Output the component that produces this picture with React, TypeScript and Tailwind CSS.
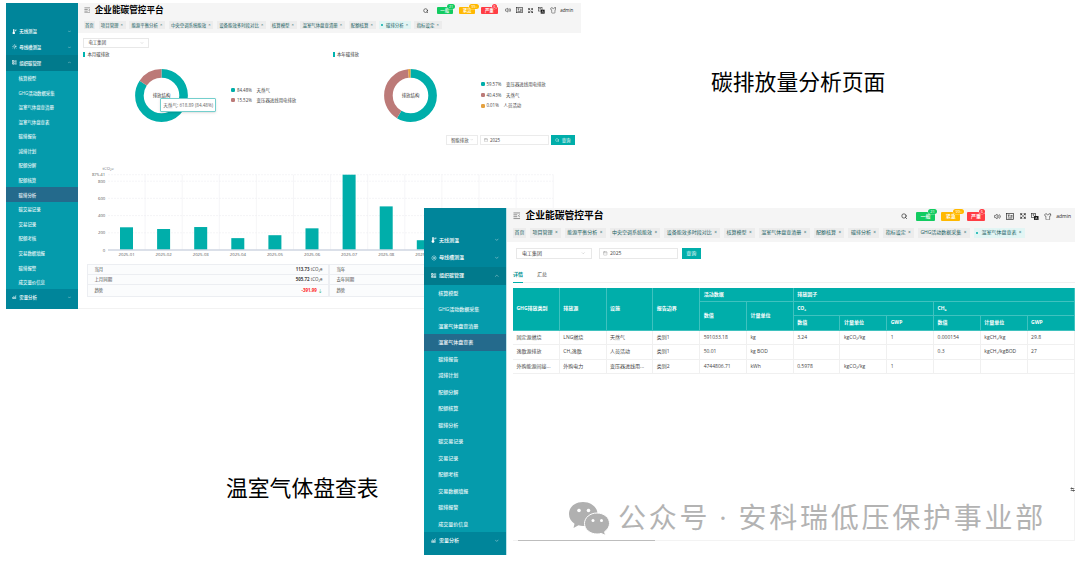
import type { ReactNode } from "react";
import {
  Calendar,
  ChartNoAxesCombined,
  ChevronDown,
  ChevronUp,
  Expand,
  LayoutList,
  Search,
  Settings2,
  Shirt,
  Sun,
  Volume2,
} from "lucide-react";

const SUB_MENU = [
  "核算模型",
  "GHG活动数据采集",
  "温室气体盘查清册",
  "温室气体盘查表",
  "碳排报告",
  "减排计划",
  "配额分解",
  "配额核算",
  "碳排分析",
  "碳交易记录",
  "交易记录",
  "配额考核",
  "交易数据填报",
  "碳排报警",
  "成交量价信息",
];

const TABS = [
  "项目管理",
  "能源平衡分析",
  "中央空调系统能效",
  "设备能效多时段对比",
  "核算模型",
  "温室气体盘查清册",
  "配额核算",
  "碳排分析",
  "指标设定",
];

const MONTHS = [
  { label: "2025-01", value: 264 },
  { label: "2025-02", value: 244 },
  { label: "2025-03", value: 267 },
  { label: "2025-04", value: 138 },
  { label: "2025-05", value: 172 },
  { label: "2025-06", value: 252 },
  { label: "2025-07", value: 875.41 },
  { label: "2025-08", value: 507 },
  { label: "2025-09", value: 113.73 },
];

type GroupProps = {
  icon: ReactNode;
  label: string;
  open?: boolean;
};

function MenuGroup({ icon, label, open = false }: GroupProps) {
  const Chevron = open ? ChevronUp : ChevronDown;

  return (
    <div
      className={`flex h-[3.55em] shrink-0 items-center pr-[1.3em] pl-[1.4em] font-medium text-white ${
        open ? "bg-[#017a8c]" : ""
      }`}
    >
      <span className="flex w-[1.6em]">{icon}</span>
      <span className="flex-1">{label}</span>
      <Chevron className="size-[1.1em] opacity-80" />
    </div>
  );
}

function ProbeIcon() {
  return (
    <svg className="size-[1.2em]" viewBox="0 0 12 12" fill="currentColor">
      <path d="M2.500 1.500a1.500 1.500 0 0 1 3 0v5.200a2.700 2.700 0 1 1-3 0Z" />
      <path d="M7 1.500h4V3H8.500v2H7Z" />
    </svg>
  );
}

// Sizes are in em so that both windows share the same markup at their own scale.
function Sidebar({ active }: { active: string }) {
  return (
    <aside className="flex w-[16.5em] shrink-0 flex-col border-r-[0.2em] border-[#bfe3e8] bg-[#00859a] pt-[4.65em]">
      <MenuGroup icon={<ProbeIcon />} label="无线测温" />
      <MenuGroup icon={<Sun className="size-[1.2em]" />} label="母线槽测温" />
      <MenuGroup icon={<LayoutList className="size-[1.1em]" strokeWidth={3} />} label="组织碳管理" open />
      <div className="bg-[#059bac]">
        {SUB_MENU.map((item) => (
          <div
            key={item}
            className={`flex h-[3.3em] items-center pt-[0.15em] pl-[2.85em] font-medium text-white/90 ${
              item === active ? "bg-[#246a8c]" : ""
            }`}
          >
            {item}
          </div>
        ))}
      </div>
      <MenuGroup icon={<ChartNoAxesCombined className="size-[1em]" strokeWidth={3} />} label="需量分析" />
    </aside>
  );
}

type AlarmProps = {
  label: string;
  count: string;
  className: string;
};

function Alarm({ label, count, className }: AlarmProps) {
  return (
    <span
      className={`relative flex h-[1.7em] w-[3.7em] items-center justify-center rounded-[0.2em] font-medium text-white ${className}`}
    >
      {label}
      <span
        className={`absolute top-[-0.75em] left-[3em] rounded-full px-[0.5em] py-[0.15em] text-[0.8em] leading-none ring-[0.3px] ring-white ${className}`}
      >
        {count}
      </span>
    </span>
  );
}

function FoldIcon() {
  return (
    <svg className="size-[1.5em] text-[#666]" viewBox="0 0 16 16" fill="none" stroke="currentColor" strokeWidth="1.500">
      <path d="M1 2h14M1 6h8M1 10h8M1 14h14M14.500 5.500 11.500 8l3 2.500" />
    </svg>
  );
}

function FontSizeIcon() {
  return (
    <svg className="h-[1.4em] w-[1.6em]" viewBox="0 0 16 14" fill="none" stroke="currentColor" strokeWidth="1.300">
      <rect x="1" y="1" width="14" height="12" />
      <path d="M3.500 4h4M5.500 4v4M9 5h4M9 7.500h4M3.500 10h9" />
    </svg>
  );
}

function TranslateIcon() {
  return (
    <svg className="size-[1.5em]" viewBox="0 0 16 16">
      <rect x="0.700" y="0.700" width="9" height="9" fill="#fff" stroke="#333" strokeWidth="1.400" />
      <path d="M3 4h4.500M5.200 2.500V7" stroke="#333" strokeWidth="1.200" />
      <rect x="6.500" y="6.500" width="9.500" height="9.500" fill="#111" />
      <path d="m9 14 2.200-5.500L13.500 14M10 12.300h2.600" fill="none" stroke="#fff" strokeWidth="0.900" />
    </svg>
  );
}

type TopBarProps = {
  tabs: string[];
  active: string;
  className?: string;
};

function TopBar({ tabs, active, className = "pr-[0.8em]" }: TopBarProps) {
  return (
    <header className="h-[6.8em] bg-[#f5f5f5]">
      <div className={`flex h-[3.1em] items-center pl-[1.3em] ${className}`}>
        <FoldIcon />
        <h1 className="ml-[0.52em] text-[1.95em] font-bold text-black">企业能碳管控平台</h1>
        <div className="ml-auto flex items-center pt-[0.25em] text-[#222]">
          <Search className="size-[1.3em]" strokeWidth={2.4} />
          <div className="ml-[1.7em] flex gap-[1.35em]">
            <Alarm label="一般" count="21" className="bg-[#12cb60]" />
            <Alarm label="紧急" count="99+" className="bg-[#ffb800]" />
            <Alarm label="严重" count="6" className="bg-[#ff3d44]" />
          </div>
          <div className="ml-[1.7em] flex items-center gap-[1.1em]">
            <Volume2 className="size-[1.4em]" />
            <FontSizeIcon />
            <Expand className="size-[1.2em]" strokeWidth={3} />
            <TranslateIcon />
            <Shirt className="size-[1.5em]" strokeWidth={1.6} />
          </div>
          <span className="ml-[0.9em]">admin</span>
        </div>
      </div>
      <nav className="mt-[0.9em] flex h-[1.9em] gap-[0.8em] pl-[1.3em] whitespace-nowrap text-[#17605f]">
        <span className="flex items-center bg-[#ececec] px-[0.3em]">首页</span>
        {tabs.map((tab) => (
          <span
            key={tab}
            className={`flex items-center pr-[0.7em] pl-[0.5em] ${
              tab === active ? "bg-[#e2f5f4]" : "bg-[#ececec]"
            }`}
          >
            {tab === active && (
              <span className="mr-[0.6em] size-[0.45em] rounded-full bg-[#00aeaa]" />
            )}
            {tab}
            <span className="ml-[0.5em] w-[0.5em] text-[0.95em]">×</span>
          </span>
        ))}
      </nav>
    </header>
  );
}

type Slice = {
  percent: string;
  name: string;
  share: number;
  color: string;
};

function Donut({ slices }: { slices: Slice[] }) {
  let start = 0;

  return (
    <svg className="size-[53px] shrink-0" viewBox="0 0 53 53">
      <g transform="rotate(-90 26.5 26.5)">
        {slices.map((s) => {
          const offset = -start;
          start += s.share;
          return (
            <circle
              key={s.name}
              cx="26.5"
              cy="26.5"
              r="22.1"
              fill="none"
              stroke={s.color}
              strokeWidth="8.6"
              pathLength="100"
              strokeDasharray={`${s.share} ${100 - s.share}`}
              strokeDashoffset={offset}
            />
          );
        })}
      </g>
      <text x="26.5" y="28.2" textAnchor="middle" fontSize="4.4" fill="#333">
        排放结构
      </text>
    </svg>
  );
}

function Share({ title, slices }: { title: string; slices: Slice[] }) {
  return (
    <section className="w-[249.5px] shrink-0">
      <h2 className="flex h-[5px] items-center text-[#333]">
        <span className="mr-[2px] h-[5px] w-[2px] bg-[#00b3af]" />
        {title}
      </h2>
      <div className="mt-[11.5px] flex items-center pl-[51.5px]">
        <Donut slices={slices} />
        <ul className="ml-[43.5px] flex flex-col gap-[6.2px] text-[#444]">
          {slices.map((s) => (
            <li key={s.name} className="flex items-center">
              <span
                className="mr-[1.5px] size-[4px] rounded-[1.3px]"
                style={{ backgroundColor: s.color }}
              />
              <span className="mr-[4.8px]">{s.percent}</span>
              {s.name}
            </li>
          ))}
        </ul>
      </div>
    </section>
  );
}

const MONTH_SLICES: Slice[] = [
  { percent: "84.48%", name: "天然气", share: 84.48, color: "#00aeaa" },
  { percent: "15.52%", name: "变压器进线用电排放", share: 15.52, color: "#bc7a78" },
];

const YEAR_SLICES: Slice[] = [
  { percent: "59.57%", name: "变压器进线用电排放", share: 58.6, color: "#00aeaa" },
  { percent: "40.43%", name: "天然气", share: 39.8, color: "#bc7a78" },
  { percent: "0.01%", name: "人员活动", share: 1.6, color: "#e4a13f" },
];

function EmissionChart() {
  const left = 25;
  const base = 87;
  const step = 37.1;
  const scale = (v: number) => base - (v / 875.41) * 75.3;

  return (
    <svg className="h-[100px] w-[480px]" viewBox="0 0 480 100" fontSize="4.3" fill="#555">
      <text x="19.5" y="7.2" fill="#6e7079">
        tCO₂e
      </text>
      {[200, 400, 600, 800, 875.41].map((v) => (
        <g key={v}>
          <line x1={left} x2={left + step * 12} y1={scale(v)} y2={scale(v)} stroke="#eeeff2" strokeWidth="0.6" strokeDasharray="2 1" />
          <text x="22.3" y={scale(v) + 1.5} textAnchor="end">
            {v}
          </text>
        </g>
      ))}
      <text x="22.3" y={base + 1.5} textAnchor="end">
        0
      </text>
      {Array.from({ length: 12 }, (_, i) => (
        <line key={i} x1={left + step * (i + 1)} x2={left + step * (i + 1)} y1="11.7" y2={base} stroke="#eeeff2" strokeWidth="0.6" />
      ))}
      {MONTHS.map((m, i) => {
        const x = left + step * i;
        return (
          <g key={m.label}>
            <rect x={x + 12} y={scale(m.value)} width="13" height={base - scale(m.value)} fill="#00aeaa" />
            <text x={x + step / 2} y="93" textAnchor="middle">
              {m.label}
            </text>
          </g>
        );
      })}
      <line x1={left} x2={left + step * 12} y1={base} y2={base} stroke="#cfd6e2" strokeWidth="1.4" />
    </svg>
  );
}

type CompareProps = {
  rows: { label: string; value: ReactNode }[];
};

function Compare({ rows }: CompareProps) {
  return (
    <dl className="w-[242px] divide-y-[0.5px] divide-[#eceef2] border-[0.5px] border-[#eceef2] bg-[#fbfcfd]">
      {rows.map((r) => (
        <div key={r.label} className="flex h-[10.3px] items-center justify-between px-[6px]">
          <dt>{r.label}</dt>
          <dd>{r.value}</dd>
        </div>
      ))}
    </dl>
  );
}

function AnalysisWindow() {
  return (
    <div className="absolute top-[3px] left-[6px] flex h-[305.5px] w-[575px] overflow-hidden bg-white text-[4.42px] leading-none">
      <Sidebar active="碳排分析" />
      <main className="-ml-[1px] min-w-0 flex-1 border-b border-[#f2f2f2] bg-white">
        <TopBar tabs={TABS} active="碳排分析" className="pr-[1.75em]" />
        <div className="pt-[4.5px] pl-[5.5px] text-[#444]">
          <div className="flex h-[10px] w-[66px] items-center justify-between border border-[#e8e8e8] px-[4px]">
            电工集团
            <ChevronDown className="size-[4px] text-[#aaa]" />
          </div>
          <div className="relative mt-[4.5px] flex">
            <Share title="本月碳排放" slices={MONTH_SLICES} />
            <Share title="本年碳排放" slices={YEAR_SLICES} />
            <div className="absolute top-[46px] left-[76.5px] flex h-[13.5px] w-[56.5px] items-center justify-center rounded-[1px] border-[0.5px] border-[#74cfcd] bg-white text-[4.6px] whitespace-nowrap text-[#666] shadow-sm">
              天然气: 618.89 (84.48%)
            </div>
          </div>
          <div className="mt-[13.5px] ml-[362.5px] flex gap-[2px]">
            <div className="flex h-[10px] w-[32px] items-center justify-between border border-[#ebebeb] pr-[3px] pl-[4px]">
              智能排放
              <ChevronDown className="size-[3.5px] text-[#aaa]" />
            </div>
            <div className="flex h-[10px] w-[69px] items-center gap-[2px] border border-[#ebebeb] pl-[3px]">
              <Calendar className="size-[4px] text-[#999]" />
              2025
            </div>
            <button className="flex h-[10px] w-[24px] items-center justify-center gap-[2px] bg-[#00aeaa] text-white">
              <Search className="size-[4.4px]" />
              查询
            </button>
          </div>
          <div className="mt-[17.5px]">
            <EmissionChart />
          </div>
          <div className="mt-[1.2px] ml-[4px] flex">
            <Compare
              rows={[
                { label: "当月", value: <><b>113.73</b> tCO₂e</> },
                { label: "上月同期", value: <><b>505.72</b> tCO₂e</> },
                { label: "趋势", value: <><b className="text-[#f22]">-391.99</b> <span className="text-[#2fae60]">↓</span></> },
              ]}
            />
            <Compare
              rows={[
                { label: "当年", value: "" },
                { label: "去年同期", value: "" },
                { label: "趋势", value: "" },
              ]}
            />
          </div>
        </div>
      </main>
    </div>
  );
}

const ROWS = [
  ["固定源燃烧", "LNG燃烧", "天然气", "类别1", "591033.18", "kg", "3.24", "kgCO₂/kg", "1", "0.000154", "kgCH₄/kg", "29.8"],
  ["逸散源排放", "CH₄逸散", "人员活动", "类别1", "50.01", "kg BOD", "", "", "", "0.3", "kgCH₄/kgBOD", "27"],
  ["外购能源间接...", "外购电力", "变压器进线用...", "类别2", "4744806.71", "kWh", "0.5978", "kgCO₂/kg", "1", "", "", ""],
];

function HeadCell({ children, rows = 1, cols = 1 }: { children: ReactNode; rows?: number; cols?: number }) {
  return (
    <th
      rowSpan={rows}
      colSpan={cols}
      className="border-r border-b border-[#3fc2bf] p-0 pl-[3.5px] text-left align-middle font-bold"
    >
      {children}
    </th>
  );
}

function InventoryTable() {
  return (
    <table className="w-[561.5px] table-fixed border-separate border-spacing-0 whitespace-nowrap">
      <colgroup>
        {ROWS[0].map((_, i) => (
          <col key={i} />
        ))}
      </colgroup>
      <thead className="bg-[#00aeaa] text-white">
        <tr className="h-[14px]">
          <HeadCell rows={3}>GHG排放类别</HeadCell>
          <HeadCell rows={3}>排放源</HeadCell>
          <HeadCell rows={3}>设施</HeadCell>
          <HeadCell rows={3}>报告边界</HeadCell>
          <HeadCell cols={2}>活动数据</HeadCell>
          <HeadCell cols={6}>排放因子</HeadCell>
        </tr>
        <tr className="h-[14px]">
          <HeadCell rows={2}>数值</HeadCell>
          <HeadCell rows={2}>计量单位</HeadCell>
          <HeadCell cols={3}>CO₂</HeadCell>
          <HeadCell cols={3}>CH₄</HeadCell>
        </tr>
        <tr className="h-[15px]">
          <HeadCell>数值</HeadCell>
          <HeadCell>计量单位</HeadCell>
          <HeadCell>GWP</HeadCell>
          <HeadCell>数值</HeadCell>
          <HeadCell>计量单位</HeadCell>
          <HeadCell>GWP</HeadCell>
        </tr>
      </thead>
      <tbody className="text-[#444]">
        {ROWS.map((row) => (
          <tr key={row[0]} className="h-[14px] even:h-[15px]">
            {row.map((cell, i) => (
              <td key={i} className="border-r border-b border-[#f0f0f0] p-0 pl-[3.5px] align-middle">
                {cell}
              </td>
            ))}
          </tr>
        ))}
      </tbody>
    </table>
  );
}

function InventoryWindow() {
  return (
    <div className="absolute top-[208px] left-[424px] flex h-[347px] w-[651px] bg-white text-[5px] leading-none">
      <Sidebar active="温室气体盘查表" />
      <main className="min-w-0 flex-1">
        <TopBar tabs={[...TABS, "GHG活动数据采集", "温室气体盘查表"]} active="温室气体盘查表" />
        <div className="pt-[5.5px] pl-[6.5px] text-[#444]">
          <div className="flex pl-[3px]">
            <div className="flex h-[11.5px] w-[75.5px] items-center justify-between border border-[#e8e8e8] px-[5px]">
              电工集团
              <ChevronDown className="size-[4.5px] text-[#aaa]" />
            </div>
            <div className="ml-[7px] flex h-[11.5px] w-[79.5px] items-center gap-[2.5px] border border-[#e8e8e8] pl-[3.5px]">
              <Calendar className="size-[4.5px] text-[#999]" />
              2025
            </div>
            <button className="ml-[3.5px] h-[11.5px] w-[19.5px] bg-[#00aeaa] text-white">查询</button>
          </div>
          <div className="mt-[9px] flex h-[14.5px] gap-[14px] border-b border-[#f0f0f0]">
            <span className="-mb-px flex items-center border-b border-[#00aeaa] font-bold text-[#00918f]">详情</span>
            <span className="flex items-center">汇总</span>
          </div>
          <div className="mt-[5px] h-[253.5px] border-r border-b border-[#f3f3f3]">
            <InventoryTable />
          </div>
        </div>
      </main>
      <div className="absolute top-[332px] left-[94px] h-[1.2px] w-[137px] bg-[#bdbdbd]" />
      <Settings2 className="absolute top-[279px] left-[646px] size-[5px] bg-white text-[#333]" strokeWidth={3} />
    </div>
  );
}

function Watermark() {
  return (
    <div className="absolute top-[499px] left-[568px] flex items-center text-[28px] leading-none font-normal tracking-[2.75px] whitespace-nowrap text-[#b3b3b3]">
      <svg className="mr-[8px] h-[36px] w-[42px]" viewBox="0 0 42 36">
        <path
          d="M15 3C7 3 1 8 1 15c0 4 2 7.500 5.500 9.800L5.500 29l5-2.700c1.500.4 3 .6 4.500.6 8 0 14.500-5.300 14.500-12S23 3 15 3Z"
          fill="#b0b0b0"
        />
        <path
          d="M29 14c-7 0-12.500 4.600-12.500 10.500S22 35 29 35c1.500 0 2.900-.2 4.200-.6l4.300 2-.9-3.700c3-2 4.900-5 4.900-8.200C41.500 18.600 36 14 29 14Z"
          fill="#b0b0b0"
          stroke="#fff"
          strokeWidth="1"
        />
        <circle cx="11" cy="11.500" r="1.800" fill="#fff" />
        <circle cx="20.500" cy="11.500" r="1.800" fill="#fff" />
        <circle cx="25" cy="21.500" r="1.500" fill="#fff" />
        <circle cx="33.500" cy="21.500" r="1.500" fill="#fff" />
      </svg>
      <span>公众号</span>
      <span className="mx-[9px]">·</span>
      <span>安科瑞低压保护事业部</span>
    </div>
  );
}

export default function App() {
  return (
    <div className="relative h-[562px] w-[1080px] overflow-hidden bg-white font-['Open_Sans','Noto_Sans_CJK_SC',sans-serif]">
      <AnalysisWindow />
      <InventoryWindow />
      <p className="absolute top-[70.5px] left-[711px] text-[21.8px] leading-none text-black">碳排放量分析页面</p>
      <p className="absolute top-[476.5px] left-[226px] text-[21.8px] leading-none text-black">温室气体盘查表</p>
      <Watermark />
    </div>
  );
}
